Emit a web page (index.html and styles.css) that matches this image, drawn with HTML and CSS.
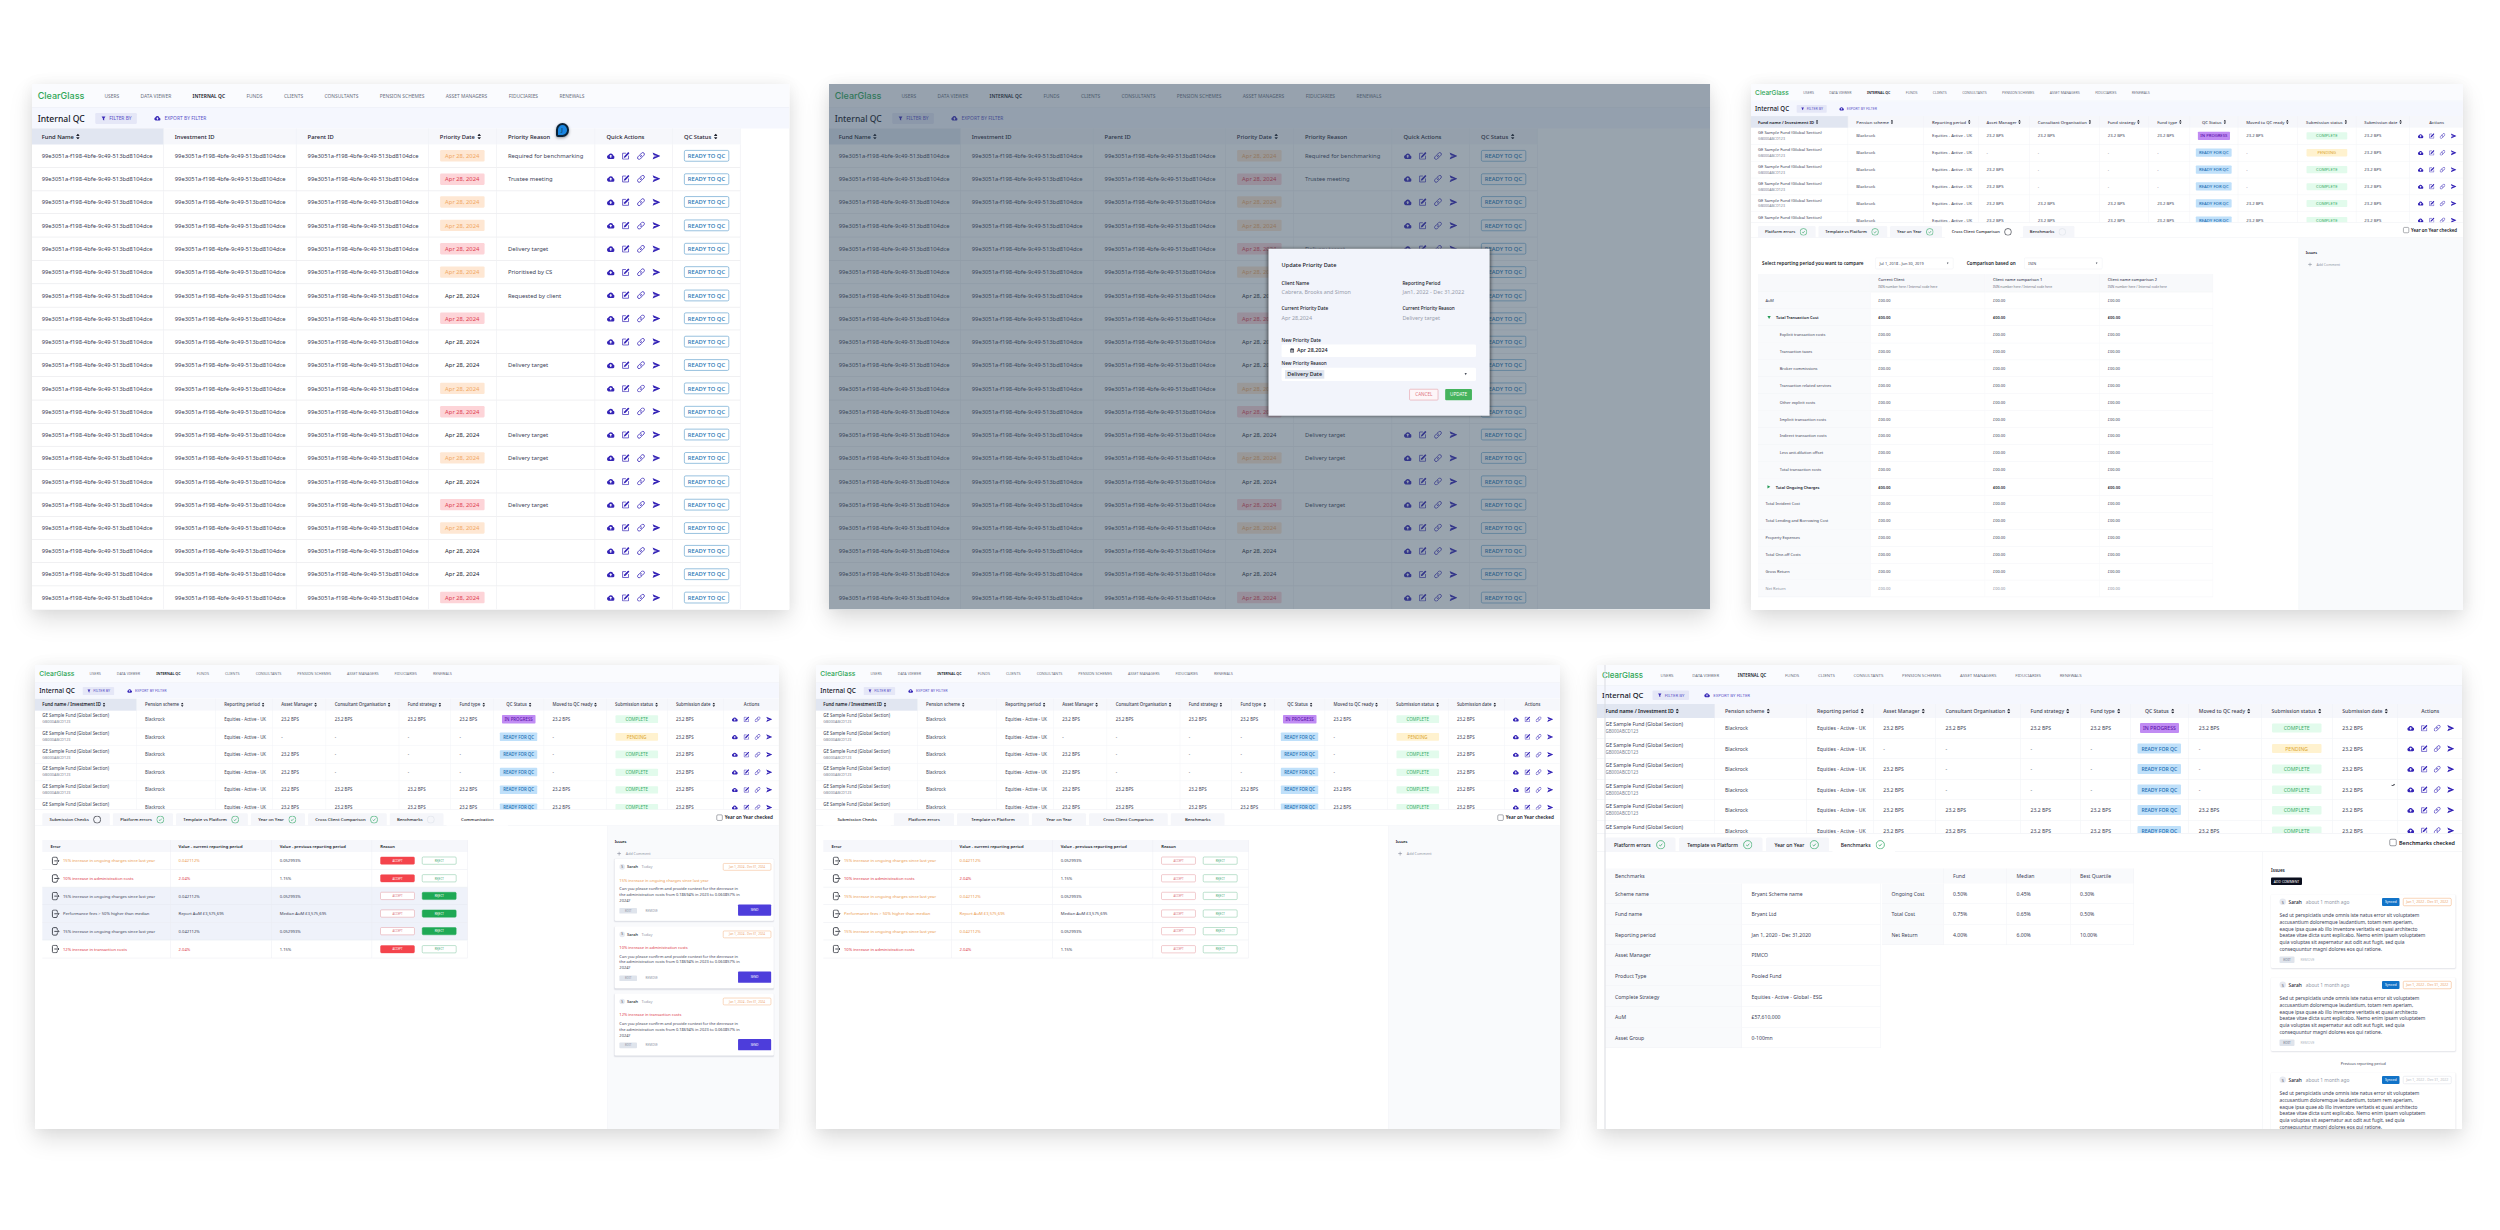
FILE: index.html
```html
<!DOCTYPE html>
<html lang="en">
<head>
<meta charset="utf-8">
<title>ClearGlass – Internal QC</title>
<link rel="stylesheet" href="styles.css">
</head>
<body>
<svg class="sprite" aria-hidden="true">
  <symbol id="i-cloud" viewBox="0 0 24 24"><path fill="currentColor" fill-rule="evenodd" d="M19 10.2A7.2 7.2 0 0 0 5.4 8.9 6 6 0 0 0 6 20.5h13a5.2 5.2 0 0 0 0-10.3zM13.6 13v4h-3.2v-4H7.5L12 8.5l4.500 4.500z"/></symbol>
  <symbol id="i-edit" viewBox="0 0 24 24"><path fill="none" stroke="currentColor" stroke-width="2" d="M13 4H3.500v17h17V11"/><path fill="currentColor" d="M7 17.500l1.200-5L19.800.8l3.400 3.200L12 15.800z"/></symbol>
  <symbol id="i-link" viewBox="0 0 24 24"><g fill="none" stroke="currentColor" stroke-width="2.300" stroke-linecap="round"><path d="M10 13.500a4.400 4.400 0 0 0 6.600.5l4-4.200a4.600 4.600 0 0 0-6.500-6.500l-3 3"/><path d="M14 10.500a4.400 4.400 0 0 0-6.600-.5l-4 4.200a4.600 4.600 0 0 0 6.500 6.500l3-3"/></g></symbol>
  <symbol id="i-send" viewBox="0 0 24 24"><path fill="currentColor" d="M1 2 24 12 1 22 4.500 14 14 12 4.500 10z"/></symbol>
  <symbol id="i-filter" viewBox="0 0 24 24"><path fill="currentColor" d="M3 3h18l-6 9v9l-6-3v-6z"/></symbol>
  <symbol id="i-sort" viewBox="0 0 12 18"><path fill="currentColor" d="M6 0l5.500 7H.5zM6 18l5.500-7H.5z"/></symbol>
  <symbol id="i-check" viewBox="0 0 24 24"><g fill="none" stroke="currentColor" stroke-width="1.900"><circle cx="12" cy="12" r="10.500"/><path d="M8 12.500l3 2.800 5-6"/></g></symbol>
  <symbol id="i-ring" viewBox="0 0 24 24"><circle cx="12" cy="12" r="10.500" fill="none" stroke="currentColor" stroke-width="2"/></symbol>
  <symbol id="i-exit" viewBox="0 0 24 24"><g fill="none" stroke="currentColor" stroke-width="2.200"><path d="M17 8V5.500A3.500 3.500 0 0 0 13.500 2h-6A3.500 3.500 0 0 0 4 5.500v13A3.500 3.500 0 0 0 7.500 22h6a3.500 3.500 0 0 0 3.500-3.500V16"/><path d="M9 12h12M18 8.500l3.500 3.500-3.500 3.500"/></g></symbol>
  <symbol id="i-plus" viewBox="0 0 24 24"><path fill="none" stroke="currentColor" stroke-width="2.500" d="M12 2v20M2 12h20"/></symbol>
  <symbol id="i-calendar" viewBox="0 0 24 24"><path fill="currentColor" d="M3 4h4V1h3v3h4V1h3v3h4v18H3zm3 6v2h12v-2zm0 5v2h12v-2z"/></symbol>
</svg>

<main class="board">
  <div class="board-row board-row-top">
    <section class="frame frame-priority"><div class="screen">
      <header data-part="header"></header>
      <div data-part="priority-table"></div>
    </div><span class="pin">J</span></section>

    <section class="frame frame-modal"><div class="screen">
      <header data-part="header"></header>
      <div data-part="priority-table"></div>
      <div class="overlay">
        <form class="modal">
          <h2>Update Priority Date</h2>
          <dl class="facts">
            <div><dt>Client Name</dt><dd>Cabrera, Brooks and Simon</dd></div>
            <div><dt>Reporting Period</dt><dd>Jan1, 2022 - Dec 31,2022</dd></div>
            <div><dt>Current Priority Date</dt><dd>Apr 28,2024</dd></div>
            <div><dt>Current Priority Reason</dt><dd>Delivery target</dd></div>
          </dl>
          <div class="field-label">New Priority Date</div>
          <div class="field field-date"><svg><use href="#i-calendar"/></svg>Apr 28,2024</div>
          <div class="field-label">New Priority Reason</div>
          <div class="field field-select"><span class="value">Delivery Date</span><i class="caret"></i></div>
          <div class="modal-actions"><span class="btn-cancel">CANCEL</span><span class="btn-update">UPDATE</span></div>
        </form>
      </div>
    </div></section>

    <section class="frame frame-compare"><div class="screen">
      <header data-part="header"></header>
      <div data-part="fund-table"></div>
      <div class="tabbar" data-part="tabs" data-tabs="Platform errors:ok|Template vs Platform:ok|Year on Year:ok|Cross Client Comparison:open:active|Benchmarks:idle" data-check="Year on Year checked"></div>
      <div class="workspace">
        <div class="content content-compare">
          <div class="filters">
            <b>Select reporting period you want to compare</b><span class="select">Jul 1, 2018 - Jun 30, 2019<i class="caret"></i></span>
            <b>Comparison based on</b><span class="select">ISIN<i class="caret"></i></span>
          </div>
          <div class="compare" data-part="compare"></div>
        </div>
        <aside class="issues"><h3>Issues</h3><div class="add"><svg><use href="#i-plus"/></svg>Add Comment</div></aside>
      </div>
    </div></section>
  </div>

  <div class="board-row board-row-bottom">
    <section class="frame frame-communication"><div class="screen">
      <header data-part="header"></header>
      <div data-part="fund-table"></div>
      <div class="tabbar" data-part="tabs" data-tabs="Submission Checks:open|Platform errors:ok|Template vs Platform:ok|Year on Year:ok|Cross Client Comparison:ok|Benchmarks:idle|Communication::active" data-check="Year on Year checked"></div>
      <div class="workspace">
        <div class="content"><div class="errors" data-part="errors-reviewed"></div></div>
        <aside class="issues"><h3>Issues</h3><div class="add"><svg><use href="#i-plus"/></svg>Add Comment</div><div data-part="error-cards"></div></aside>
      </div>
    </div></section>

    <section class="frame frame-submission"><div class="screen">
      <header data-part="header"></header>
      <div data-part="fund-table"></div>
      <div class="tabbar" data-part="tabs" data-tabs="Submission Checks::active|Platform errors|Template vs Platform|Year on Year|Cross Client Comparison|Benchmarks" data-check="Year on Year checked"></div>
      <div class="workspace">
        <div class="content"><div class="errors" data-part="errors-open"></div></div>
        <aside class="issues"><h3>Issues</h3><div class="add"><svg><use href="#i-plus"/></svg>Add Comment</div></aside>
      </div>
    </div></section>

    <section class="frame frame-benchmarks"><div class="screen">
      <header data-part="header"></header>
      <div data-part="fund-table"></div>
      <div class="tabbar" data-part="tabs" data-tabs="Platform errors:ok|Template vs Platform:ok|Year on Year:ok|Benchmarks:ok:active" data-check="Benchmarks checked"></div>
      <div class="workspace">
        <div class="content">
          <div class="bench-head"><span>Benchmarks</span><span></span><span></span><span>Fund</span><span>Median</span><span>Best Quartile</span></div>
          <div class="bench-body">
            <div class="bench-scheme" data-part="bench-scheme"></div>
            <div class="bench-costs" data-part="bench-costs"></div>
          </div>
        </div>
        <aside class="issues issues-light"><h3>Issues</h3><span class="btn-comment">ADD COMMENT</span><div data-part="notes"></div></aside>
      </div>
      <i class="guide"></i><i class="cursor"></i>
    </div></section>
  </div>
</main>
<script src="script.js"></script>
</body>
</html>
```

FILE: styles.css
```css
* { box-sizing: border-box; }
body { margin: 0; width: 2500px; height: 1230px; overflow: hidden; background: #fff; font-family: "Noto Sans", "Open Sans", sans-serif; color: #3c4257; }
h2, h3, dl, dd { margin: 0; font-size: inherit; }
svg { display: block; flex: none; }
.sprite { position: absolute; width: 0; height: 0; }

/* Board: six screens in two rows, each one a scaled canvas */
.board { padding-top: 84.300px; }
.board-row { display: flex; align-items: flex-start; }
.board-row-top { padding-left: 31.500px; height: 580.700px; }
.board-row-bottom { padding-left: 34.500px; }
.frame { position: relative; flex: none; width: calc(var(--w) * var(--k) * 1px); height: calc(var(--h) * var(--k) * 1px); box-shadow: 0 10px 22px rgba(0,0,0,.13), 0 0 14px rgba(0,0,0,.05); }
.screen { position: relative; display: flex; flex-direction: column; width: calc(var(--w) * 1px); height: calc(var(--h) * 1px); transform: scale(var(--k)); transform-origin: 0 0; overflow: hidden; background: #fff; font-size: 10.200px; }
.frame-priority { --w: 1329; --h: 922; --k: .57; margin-right: 40px; }
.frame-modal { --w: 1546; --h: 922; --k: .57; margin-right: 40.700px; }
.frame-compare { --w: 1730; --h: 1278; --k: .4115; }
.frame-communication { --w: 1730; --h: 1079; --k: .43; margin-right: 37.600px; }
.frame-submission { --w: 1730; --h: 1079; --k: .43; margin-right: 37px; }
.frame-benchmarks { --w: 1730; --h: 928; --k: .5; }

/* Header */
.nav { display: flex; align-items: center; gap: 37.500px; height: 42px; padding-left: 10px; background: #fafbfe; border-bottom: 1px solid #e9ecf4; font-size: 8.600px; color: #6b7080; white-space: nowrap; }
.nav .logo { width: 79.500px; font: 500 15.800px Inter, sans-serif; color: #2fa656; }
.nav .current { color: #14161f; font-weight: 600; }
.subhead { display: flex; align-items: center; height: 36px; padding-left: 10px; background: #f5f7fe; color: #5a52c9; font-size: 8.600px; white-space: nowrap; }
.subhead .title { width: 100.500px; font-size: 15px; font-weight: 500; color: #14161f; }
.subhead .filter { display: flex; align-items: center; gap: 6px; width: 73px; height: 19px; padding-left: 10px; margin-right: 30px; background: #e5e7f7; border-radius: 2px; }
.subhead .export { display: flex; align-items: center; gap: 7px; }
.subhead svg { width: 9px; height: 9px; color: #3a2bb8; }
.subhead .export svg { width: 12px; height: 12px; }

/* Tables */
.thead { display: grid; height: 28px; background: #f6f7fb; font-weight: 500; color: #3f4454; white-space: nowrap; flex: none; }
.thead > span { display: flex; align-items: center; gap: 4px; padding-left: 20px; border-right: 1px solid #eff1f6; }
.thead > span:first-child { padding-left: 17px; background: #e1e6f1; color: #14161f; font-weight: 600; }
.thead svg { width: 7px; height: 10.500px; color: #20232e; }
.trow { display: grid; white-space: nowrap; }
.trow > span { display: flex; align-items: center; padding-left: 20px; border-right: 1px solid #eff1f5; border-bottom: 1px solid #eff1f5; }
.trow > span:first-child { padding-left: 17px; }
.trow .acts { gap: 12px; padding-left: 19.500px; color: #3423b6; }
.acts svg { width: 14.700px; height: 14.700px; }
.badge { display: flex; align-items: center; justify-content: center; height: 20px; border-radius: 2px; font-weight: 400; }

.priority { width: 1243px; }
.priority .thead, .priority .trow { grid-template-columns: 230.500px 233px 232px 119.500px 173px 136px 119px; }
.priority .thead { color: #1d2130; }
.priority .thead > span:first-child { font-weight: 500; }
.priority .trow { height: 40.800px; }
.priority .trow > span { border-right-color: #ebecf1; border-bottom: 1.800px solid #e4e5e9; }
.priority .badge { width: 78.500px; }
.badge.soon { background: #fee7d3; color: #f1a763; }
.badge.late { background: #fdd4d8; color: #dd4150; }
.badge.none { color: #23262f; }
.badge.qc { border: 1.300px solid #4a93c6; border-radius: 3px; color: #2374b3; font-weight: 500; }

.funds { height: 259px; overflow: hidden; border-bottom: 1px solid #e9ebf0; flex: none; }
.funds .thead, .funds .trow { grid-template-columns: 236px 184px 132.500px 124.500px 170px 120px 100px 116.500px 145.500px 141.500px 130px 130px; }
.funds .trow { height: 41.100px; }
.funds .trow > span:first-child { flex-direction: column; align-items: flex-start; justify-content: center; line-height: 15.500px; }
.funds small { font-size: 8.800px; color: #7a8090; }
.funds .trow:last-child small { visibility: hidden; }
.funds .thead > span:nth-child(8) { padding-left: 29px; }
.funds .thead > span:last-child { padding-left: 48px; }
.funds .trow > span:nth-child(8), .funds .trow > span:nth-child(10) { padding: 0; justify-content: center; }
.badge.progress { width: 78px; background: #c08bf3; color: #5c14ab; font-weight: 500; }
.badge.ready { width: 87px; background: #bfe0fa; color: #1a6cb0; font-weight: 500; }
.badge.complete { width: 99px; height: 17.500px; background: #e2fbec; color: #3dab6a; }
.badge.pending { width: 99px; height: 17.500px; background: #fff2cf; color: #dba632; }

/* Tabs */
.tabbar { display: flex; align-items: center; gap: 7px; height: 37px; padding: 8px 14px 0 17px; border-bottom: 1px solid #eceef3; font-weight: 500; color: #14161f; white-space: nowrap; flex: none; }
.tab { display: flex; align-items: center; gap: 10px; height: 29px; padding: 0 20px 0 17px; background: #f5f6fa; border-radius: 3px 3px 0 0; font-size: 10px; }
.tab.active { background: #fff; }
.tab.plain { padding: 0 33px; }
.tab svg { width: 19px; height: 19px; }
.tab .ok { color: #32a866; }
.tab .open { color: #20232e; }
.tab .idle { color: #dfe3ea; }
.checked { display: flex; align-items: center; gap: 5px; margin: -9px 0 0 auto; font-size: 10.800px; font-weight: 600; }
.checked i { width: 14px; height: 14px; border: 1.500px solid #3b3f4a; border-radius: 3px; }

/* Workspace */
.workspace { display: flex; flex: 1; min-height: 0; }
.content { flex: 1; padding: 33px 0 0 17px; }
.issues { width: 399px; padding: 30px 13px 0 16px; background: #f9fafc; border-left: 1px solid #eff1f5; }
.issues-light { background: #fff; }
.issues h3 { font-size: 9px; line-height: 14px; font-weight: 600; color: #20232e; }
.issues-light h3 { margin-bottom: 6.500px; }
.add { display: flex; align-items: center; gap: 10px; height: 14px; margin: 13px 0 6px 5px; font-size: 8.500px; color: #9197a5; }
.add svg { width: 11px; height: 11px; color: #70778a; }
.caret { width: 0; height: 0; border: 2.500px solid transparent; border-top: 4px solid #4a4f5c; border-bottom: 0; }

/* Client comparison */
.content-compare { padding-top: 48px; }
.filters { display: flex; align-items: center; height: 28px; padding-left: 10px; margin-bottom: 12px; color: #1a1d29; white-space: nowrap; }
.filters b { font-size: 11.200px; font-weight: 600; letter-spacing: .05px; width: 275px; }
.filters b + .select + b { width: 140px; margin-left: 32px; }
.select { display: flex; align-items: center; justify-content: space-between; width: 190px; height: 28px; padding: 0 11px 0 9px; border: 1px solid #eceef3; border-radius: 3px; font-size: 9.500px; color: #3c4257; }
.crow { display: grid; grid-template-columns: 273px 279px 279px 275px; width: 1106px; height: 41.200px; font-size: 9.600px; }
.crow > span { display: flex; flex-direction: column; justify-content: center; padding-left: 19px; border-right: 1px solid #f3f4f8; border-bottom: 1px solid #eff1f5; }
.crow > span:first-child { background: #f9fafc; padding-left: 18px; }
.crow.head { height: 44px; font-weight: 500; }
.crow.head > span { background: #f8f9fb; gap: 5px; line-height: 12px; }
.crow small { font-size: 8px; line-height: 10px; font-weight: 400; color: #6b7080; }
.crow.child > span:first-child { padding-left: 53px; }
.crow.group { font-weight: 600; color: #20232e; }
.crow.group > span:first-child { flex-direction: row; justify-content: flex-start; align-items: center; gap: 13px; padding-left: 23px; }
.crow.faded { color: #8b90a0; }
.arrow { width: 0; height: 0; border: 4px solid transparent; border-top: 7px solid #249a55; border-bottom: 0; }
.arrow.closed { border: 4px solid transparent; border-left: 7px solid #249a55; border-right: 0; }

/* Error list */
.erow { display: grid; grid-template-columns: 298px 235px 234px 222px; width: 989px; height: 41.100px; font-size: 9.600px; white-space: nowrap; }
.erow > span { display: flex; align-items: center; padding-left: 19px; border-right: 1px solid #e9ebf1; border-bottom: 1.500px solid #e6e8ee; }
.erow.head { height: 28px; background: #f6f7fb; font-weight: 600; color: #20232e; }
.erow.head > span { border-bottom: 0; }
.erow svg { width: 21px; height: 21px; margin: 0 7px 0 0; color: #2b2e38; }
.erow .first { padding-left: 20px; }
.erow.done { background: #eff2fa; }
.erow.warn .tone { color: #eb9a4e; }
.erow.bad .tone { color: #dc3545; }
.choice { display: flex; align-items: center; justify-content: center; width: 80px; height: 18px; margin-right: 17px; border: 1.300px solid; border-radius: 3px; font-size: 6.500px; font-weight: 400; }
.choice.no { color: #d9707a; border-color: #e18a92; background: #fff; }
.choice.yes { color: #45a874; border-color: #6bbc92; background: #fff; }
.choice.no.fill { background: #f4444c; border-color: #f4444c; color: #fff; }
.choice.yes.fill { background: #1fa955; border-color: #1fa955; color: #fff; }

/* Comment cards */
.card { width: 370px; height: 144px; margin-bottom: 12.600px; padding: 9px 6px 0 11px; background: #fff; border-radius: 3px; box-shadow: 0 1.500px 3px rgba(30,40,80,.13); font-size: 9.300px; }
.card-top { display: flex; align-items: center; height: 19px; color: #9298a8; }
.avatar { display: flex; align-items: center; justify-content: center; width: 13px; height: 13px; margin-right: 5px; border-radius: 50%; background: #e6e9f0; font-size: 7.500px; color: #4a4f5c; }
.card-top b { margin-right: 8px; font-weight: 500; color: #20232e; }
.period { display: flex; align-items: center; justify-content: center; width: 112px; height: 17px; margin-left: auto; border: 1px solid #f0a871; border-radius: 3px; font-size: 7px; color: #eda36c; }
.card-title { margin: 15px 0 6px; line-height: 14px; color: #eb9a4e; }
.card.bad .card-title { color: #dc3545; }
.card p { margin: 0; line-height: 13.600px; white-space: nowrap; }
.card-foot { display: flex; align-items: center; height: 24px; font-size: 7px; color: #8c93a3; }
.chip { display: flex; align-items: center; justify-content: center; width: 41px; height: 13px; margin-right: 20px; border-radius: 2px; background: #dfe4ec; }
.send { display: flex; align-items: center; justify-content: center; width: 77px; height: 26px; margin: -4px 0 0 auto; border-radius: 2px; background: #4d3ddb; color: #fff; }
.card:not(.note) .card-foot { margin-top: 5px; }

.btn-comment { display: flex; align-items: center; justify-content: center; width: 62px; height: 15.500px; margin-bottom: 19px; border-radius: 2px; background: #0b0f1e; color: #fff; font-size: 6.800px; }
.note { width: 369px; height: 147px; margin-bottom: 19px; padding: 5px 8px 0 17px; font-size: 9.700px; }
.note .period { width: 97px; height: 16px; margin-left: 7px; }
.note .period.past { color: #b9bdc8; border-color: #dcdfe6; }
.note .synced { display: flex; align-items: center; justify-content: center; width: 35px; height: 16px; margin-left: auto; border-radius: 2px; background: #1173c8; color: #fff; font-size: 7px; }
.note p { margin-top: 11px; line-height: 13.400px; }
.note .chip { width: 30px; margin-right: 12px; }
.note .card-foot { margin-top: 3px; color: #b4b9c5; }
.note .chip { color: #747b8c; }
.previous { height: 24px; text-align: center; font-size: 7.500px; line-height: 12px; }

/* Benchmarks */
.bench-head { display: grid; grid-template-columns: 273px 277px 126px 127px 127px 127px; width: 1057px; height: 30px; background: #f9fafc; }
.bench-head > span { display: flex; align-items: center; padding-left: 19px; }
.bench-head > span:nth-child(n+3) { border-right: 1px solid #f1f2f6; }
.bench-body { display: flex; align-items: flex-start; gap: 3px; }
.brow { display: grid; grid-template-columns: 273px 277px; height: 41.100px; }
.bench-costs .brow { grid-template-columns: 123px 127px 127px 127px; }
.brow > span { display: flex; align-items: center; padding-left: 19px; border-right: 1px solid #f1f2f6; border-bottom: 1px solid #f1f2f6; }
.brow > span:first-child { background: #f9fafc; }
.guide { position: absolute; left: 15px; top: 0; width: 1.500px; height: 100%; background: #d9dce2; }
.cursor { position: absolute; left: 1588px; top: 237px; width: 8px; height: 5px; background: #20232e; clip-path: polygon(0 50%, 35% 65%, 100% 0, 85% 70%, 30% 100%); }

/* Priority screens: comment pin and dialog */
.pin { position: absolute; left: 524px; top: 39px; display: flex; align-items: center; justify-content: center; width: 13px; height: 13.500px; border: 2px solid #0b2338; border-radius: 50% 50% 50% 15%; background: #1a86e0; color: #0b2338; font-size: 6px; box-shadow: 0 1px 3px rgba(0,0,0,.4); }
.overlay { position: absolute; inset: 0; background: rgba(52,73,94,.5); }
.modal { position: absolute; left: 770.500px; top: 288.500px; width: 388px; height: 293px; padding: 22px 23.500px 0; background: #f2f4fb; box-shadow: 0 1px 5px 2px rgba(30,30,30,.55); font-size: 9.500px; white-space: nowrap; color: #14161f; }
.modal h2 { font-size: 9.800px; line-height: 14px; font-weight: 500; }
.facts { display: grid; grid-template-columns: 212px 1fr; height: 117px; padding-top: 17px; grid-auto-rows: 45.500px; }
.facts dt, .field-label { font-size: 8.200px; line-height: 14px; font-weight: 500; }
.facts dd { line-height: 20px; color: #979cab; }
.field { display: flex; align-items: center; height: 22.500px; margin-bottom: 4px; background: #fff; border-radius: 2px; font-weight: 500; }
.field-label { height: 15px; }
.field-date { gap: 4px; padding-left: 14px; }
.field-date svg { width: 9px; height: 9px; color: #4a4f5c; }
.field-select { justify-content: space-between; padding: 0 16px 0 6px; }
.field .value { padding: 1px 4px; background: #dfe5ef; }
.modal-actions { display: flex; gap: 12px; justify-content: flex-end; padding: 10px 7px 0; font-size: 8px; }
.modal-actions span { display: flex; align-items: center; justify-content: center; height: 20px; border-radius: 2px; }
.btn-cancel { width: 51px; border: 1px solid #e79aa4; color: #dd7582; background: #fdf6f8; }
.btn-update { width: 47px; background: #45b35d; color: #fff; }
```

FILE: script.js
```js
const icon = (name, cls = '') => `<svg class="${cls}"><use href="#i-${name}"/></svg>`;
const cells = list => list.map(c => `<span>${c}</span>`).join('');
const actions = `${icon('cloud')}${icon('edit')}${icon('link')}${icon('send')}`;

function header() {
  const items = ['USERS', 'DATA VIEWER', 'INTERNAL QC', 'FUNDS', 'CLIENTS', 'CONSULTANTS', 'PENSION SCHEMES', 'ASSET MANAGERS', 'FIDUCIARIES', 'RENEWALS'];
  return `<nav class="nav"><span class="logo">ClearGlass</span>${items.map(i =>
    `<span class="${i === 'INTERNAL QC' ? 'current' : ''}">${i}</span>`).join('')}</nav>
    <div class="subhead"><span class="title">Internal QC</span><span class="filter">${icon('filter')}FILTER BY</span><span class="export">${icon('cloud')}EXPORT BY FILTER</span></div>`;
}

function priorityTable() {
  const id = '99e3051a-f198-4bfe-9c49-513bd8104dce';
  const states = 'soon late soon soon late soon none late none none soon late none soon none late soon none none late'.split(' ');
  const reasons = { 0: 'Required for benchmarking', 1: 'Trustee meeting', 4: 'Delivery target', 5: 'Prioritised by CS', 6: 'Requested by client', 9: 'Delivery target', 12: 'Delivery target', 13: 'Delivery target', 15: 'Delivery target' };
  const s = icon('sort');
  const rows = states.map((state, i) => `<div class="trow">${cells([id, id, id, `<b class="badge ${state}">Apr 28, 2024</b>`, reasons[i] || ''])}<span class="acts">${actions}</span><span><b class="badge qc">READY TO QC</b></span></div>`);
  return `<div class="priority"><div class="thead">${cells(['Fund Name' + s, 'Investment ID', 'Parent ID', 'Priority Date' + s, 'Priority Reason', 'Quick Actions', 'QC Status' + s])}</div>${rows.join('')}</div>`;
}

function fundTable() {
  const heads = ['Fund name / Investment ID', 'Pension scheme', 'Reporting period', 'Asset Manager', 'Consultant Organisation', 'Fund strategy', 'Fund type', 'QC Status', 'Moved to QC ready', 'Submission status', 'Submission date'];
  const v = '23.2 BPS';
  const data = [[v, v, 'progress'], ['-', '-', 'ready'], [v, '-', 'ready'], [v, '-', 'ready'], [v, v, 'ready'], [v, v, 'ready']];
  const rows = data.map(([asset, rest, qc], i) => {
    const sub = i === 1 ? 'pending' : 'complete';
    return `<div class="trow">${cells(['GE Sample Fund (Global Section)<small>GB000ABCD123</small>', 'Blackrock', 'Equities - Active - UK', asset, rest, rest, rest,
      `<b class="badge ${qc}">${qc === 'ready' ? 'READY FOR QC' : 'IN PROGRESS'}</b>`, rest,
      `<b class="badge ${sub}">${sub.toUpperCase()}</b>`, v])}<span class="acts">${actions}</span></div>`;
  });
  return `<div class="funds"><div class="thead">${cells([...heads.map(h => h + icon('sort')), 'Actions'])}</div>${rows.join('')}</div>`;
}

function tabs(el) {
  const marks = { ok: 'check', open: 'ring', idle: 'ring' };
  return el.dataset.tabs.split('|').map(t => {
    const [label, mark, active] = t.split(':');
    return `<span class="tab ${active || ''} ${mark ? '' : 'plain'}">${label}${mark ? icon(marks[mark], mark) : ''}</span>`;
  }).join('') + `<span class="checked"><i></i>${el.dataset.check}</span>`;
}

function compare() {
  const code = '<small>ISIN number here / Internal code here</small>';
  const rows = [['AuM'], ['Total Transaction Cost', 'group', 'arrow'], ...['Explicit transaction costs', 'Transaction taxes', 'Broker commissions', 'Transaction related services', 'Other explicit costs', 'Implicit transaction costs', 'Indirect transaction costs', 'Less anti-dilution offset', 'Total transaction costs'].map(n => [n, 'child']),
    ['Total Ongoing Charges', 'group', 'arrow closed'], ['Total Incident Cost'], ['Total Lending and Borrowing Cost'], ['Property Expenses'], ['Total One-off Costs'], ['Gross Return'], ['Net Return', 'faded']];
  return `<div class="crow head">${cells(['', 'Current Client' + code, 'Client name comparison 1' + code, 'Client name comparison 2' + code])}</div>` +
    rows.map(([name, cls = '', arrow]) => `<div class="crow ${cls}">${cells([(arrow ? `<i class="${arrow}"></i>` : '') + name, '£00.00', '£00.00', '£00.00'])}</div>`).join('');
}

const charges = '15% increase in ongoing charges since last year';
const admin = '10% increase in administration costs';
function errors(list) {
  return `<div class="erow head">${cells(['Error', 'Value - current reporting period', 'Value - previous reporting period', 'Reason'])}</div>` +
    list.map(([name, now, before, tone, no, yes]) => `<div class="erow ${tone}"><span class="first tone">${icon('exit')}${name}</span><span class="tone">${now}</span><span>${before}</span><span><b class="choice no ${no}">ACCEPT</b><b class="choice yes ${yes}">REJECT</b></span></div>`).join('');
}
const fees = ['Performance fees > 50% higher than median', 'Report AuM £3,575,695', 'Median AuM £3,575,695'];
const reviewed = [
  [charges, '0.042112%', '0.052993%', 'warn', 'fill', ''],
  [admin, '2.04%', '1.15%', 'bad', 'fill', ''],
  [charges, '0.042112%', '0.052993%', 'done', '', 'fill'],
  [...fees, 'done', '', 'fill'],
  [charges, '0.042112%', '0.052993%', 'done', '', 'fill'],
  ['12% increase in transaction costs', '2.04%', '1.15%', 'bad', 'fill', '']];
const open = [
  [charges, '0.042112%', '0.052993%', 'warn', '', ''],
  [admin, '2.04%', '1.15%', 'bad', '', ''],
  [charges, '0.042112%', '0.052993%', 'warn', '', ''],
  [...fees, 'warn', '', ''],
  [charges, '0.042112%', '0.052993%', 'warn', '', ''],
  [admin, '2.04%', '1.15%', 'bad', '', '']];

const errorCards = () => [[charges, ''], [admin, 'bad'], ['12% increase in transaction costs', 'bad']].map(([title, cls]) =>
  `<article class="card ${cls}"><div class="card-top"><span class="avatar">S</span><b>Sarah</b>Today<span class="period">Jan 1, 2024 - Dec 31, 2024</span></div>
  <div class="card-title">${title}</div><p>Can you please confirm and provide context for the decrease in<br>the administration costs from 0.18694% in 2023 to 0.060857% in<br>2024?</p>
  <div class="card-foot"><span class="chip">EDIT</span>REMOVE<span class="send">SEND</span></div></article>`).join('');

const note = past => `<article class="card note"><div class="card-top"><span class="avatar">S</span><b>Sarah</b>about 1 month ago<span class="synced">Synced</span><span class="period ${past}">Jan 1, 2022 - Dec 31, 2022</span></div>
  <p>Sed ut perspiciatis unde omnis iste natus error sit voluptatem<br>accusantium doloremque laudantium, totam rem aperiam,<br>eaque ipsa quae ab illo inventore veritatis et quasi architecto<br>beatae vitae dicta sunt explicabo. Nemo enim ipsam voluptatem<br>quia voluptas sit aspernatur aut odit aut fugit, sed quia<br>consequuntur magni dolores eos qui ratione.</p>
  <div class="card-foot"><span class="chip">EDIT</span>REMOVE</div></article>`;

const bench = rows => rows.map(r => `<div class="brow">${cells(r)}</div>`).join('');

const parts = {
  header, tabs, compare, 'priority-table': priorityTable, 'fund-table': fundTable,
  'errors-reviewed': () => errors(reviewed), 'errors-open': () => errors(open), 'error-cards': errorCards,
  notes: () => note('') + note('') + '<div class="previous">Previous reporting period</div>' + note('past'),
  'bench-scheme': () => bench([['Scheme name', 'Bryant Scheme name'], ['Fund name', 'Bryant Ltd'], ['Reporting period', 'Jan 1, 2020 - Dec 31,2020'], ['Asset Manager', 'PIMCO'], ['Product Type', 'Pooled Fund'], ['Complete Strategy', 'Equities - Active - Global - ESG'], ['AuM', '£57,610,000'], ['Asset Group', '0-100mn']]),
  'bench-costs': () => bench([['Ongoing Cost', '0.50%', '0.45%', '0.30%'], ['Total Cost', '0.75%', '0.65%', '0.50%'], ['Net Return', '4.00%', '6.00%', '10.00%']])
};
document.querySelectorAll('[data-part]').forEach(el => { el.innerHTML = parts[el.dataset.part](el); });
```
